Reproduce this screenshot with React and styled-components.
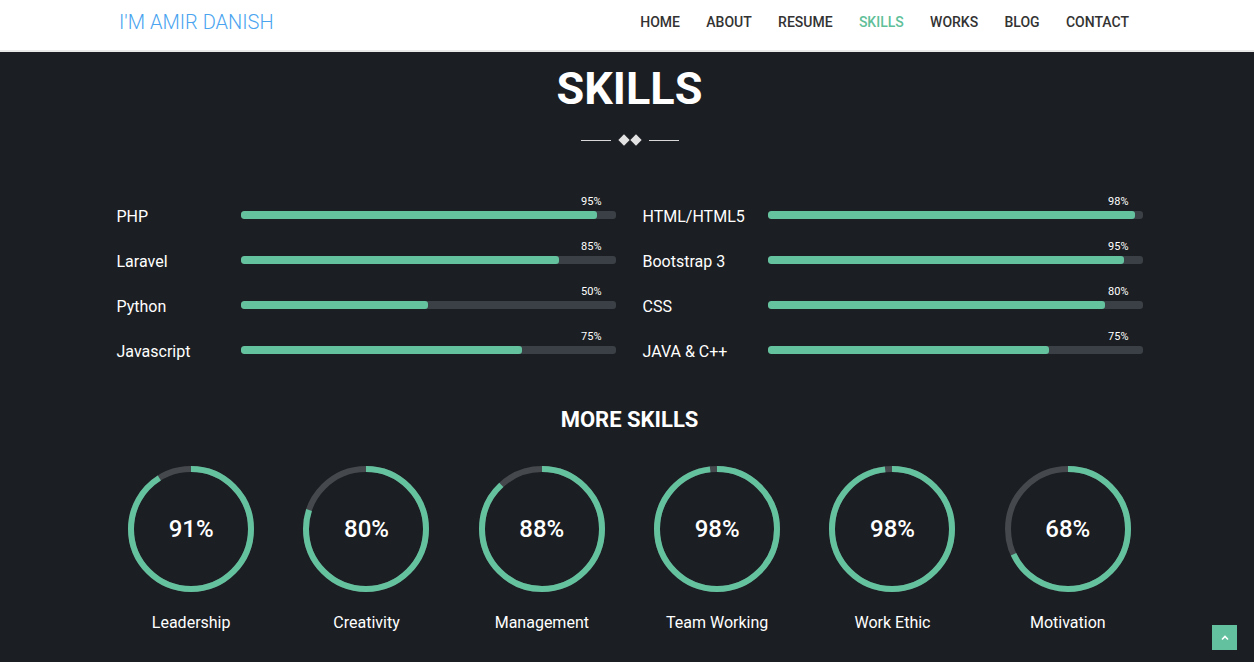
import styled, { createGlobalStyle } from "styled-components";

const GlobalStyle = createGlobalStyle`
  * {
    box-sizing: border-box;
  }
  body {
    margin: 0;
    background-color: #1b1e22;
    font-family: Roboto, "Liberation Sans", sans-serif;
    color: #fff;
    overflow: hidden;
  }
`;

const Header = styled.header`
  height: 52px;
  padding-right: 6px;
  background-color: #fff;
  border-bottom: 2px solid #e9e9e9;
`;

const HeaderInner = styled.div`
  width: 1010px;
  margin: 0 auto;
  height: 43px;
  display: flex;
  align-items: center;
  justify-content: space-between;
`;

const Logo = styled.a`
  font-size: 20px;
  font-weight: 300;
  color: #4aa4f0;
  text-decoration: none;
`;

const Nav = styled.nav`
  display: flex;
  gap: 26.3px;
`;

const NavLink = styled.a`
  font-size: 14px;
  font-weight: 500;
  color: ${(p) => (p.$active ? "#5fbf99" : "#333")};
  text-decoration: none;
`;

const Section = styled.section`
  padding: 14px 0 0 5px;
`;

const Container = styled.div`
  width: 1026px;
  margin: 0 auto;
`;

const Title = styled.h1`
  margin: 0;
  font-size: 45px;
  line-height: 46px;
  font-weight: 700;
  text-align: center;
`;

const Separator = styled.div`
  display: flex;
  justify-content: center;
  align-items: center;
  height: 10px;
  margin-top: 23px;
  gap: 9px;
`;

const Line = styled.span`
  width: 30px;
  height: 1px;
  background-color: #d8d8d8;
`;

const Diamonds = styled.span`
  display: flex;
  gap: 4px;
`;

const Diamond = styled.span`
  width: 8px;
  height: 8px;
  background-color: #e2e2e2;
  transform: rotate(45deg);
`;

const BarsGrid = styled.div`
  display: grid;
  grid-template-columns: 499px 500px;
  gap: 27px;
  margin-top: 50px;
`;

const BarList = styled.div`
  display: flex;
  flex-direction: column;
  gap: 21px;
`;

const SkillRow = styled.div`
  display: grid;
  grid-template-columns: ${(p) => p.$labelWidth}px 1fr;
  grid-template-rows: 13px 8px;
  row-gap: 3px;
`;

const Percent = styled.span`
  grid-column: 2;
  grid-row: 1;
  font-size: 11px;
  line-height: 13px;
  text-align: right;
  padding-right: 14px;
  color: #fff;
`;

const SkillLabel = styled.span`
  grid-column: 1;
  grid-row: 2;
  align-self: center;
  padding-top: 4px;
  font-size: 16px;
  line-height: 20px;
  white-space: nowrap;
`;

const Track = styled.div`
  grid-column: 2;
  grid-row: 2;
  height: 8px;
  border-radius: 3px;
  background-color: #3b3f46;
  overflow: hidden;
`;

const Fill = styled.div`
  height: 100%;
  background-color: #65c29f;
  border-radius: 3px;
`;

const SubTitle = styled.h2`
  margin: 53px 0 0;
  font-size: 22px;
  line-height: 26px;
  font-weight: 700;
  text-align: center;
`;

const CircleRow = styled.div`
  width: 1052px;
  margin: 32px auto 0;
  display: grid;
  grid-template-columns: repeat(6, 1fr);
`;

const CircleItem = styled.div`
  display: flex;
  flex-direction: column;
  align-items: center;
`;

const Ring = styled.div`
  position: relative;
  width: 128px;
  height: 128px;
`;

const RingValue = styled.span`
  position: absolute;
  inset: 0;
  display: flex;
  align-items: center;
  justify-content: center;
  font-size: 24px;
  font-weight: 500;
`;

const CircleLabel = styled.span`
  margin-top: 20px;
  font-size: 16px;
  line-height: 20px;
`;

const ScrollTop = styled.a`
  position: fixed;
  right: 17px;
  bottom: 12px;
  width: 25px;
  height: 25px;
  background-color: #64c19f;
  display: flex;
  align-items: center;
  justify-content: center;
`;

const navItems = ["HOME", "ABOUT", "RESUME", "SKILLS", "WORKS", "BLOG", "CONTACT"];

const leftSkills = [
  { name: "PHP", value: 95, fill: 95 },
  { name: "Laravel", value: 85, fill: 85 },
  { name: "Python", value: 50, fill: 50 },
  { name: "Javascript", value: 75, fill: 75 },
];

const rightSkills = [
  { name: "HTML/HTML5", value: 98, fill: 98 },
  { name: "Bootstrap 3", value: 95, fill: 95 },
  { name: "CSS", value: 80, fill: 90 },
  { name: "JAVA & C++", value: 75, fill: 75 },
];

const moreSkills = [
  { name: "Leadership", value: 91 },
  { name: "Creativity", value: 80 },
  { name: "Management", value: 88 },
  { name: "Team Working", value: 98 },
  { name: "Work Ethic", value: 98 },
  { name: "Motivation", value: 68 },
];

function CircleChart({ value }) {
  const r = 60;
  const c = 2 * Math.PI * r;
  return (
    <Ring>
      <svg width="128" height="128" viewBox="0 0 128 128">
        <circle cx="64" cy="64" r={r} fill="none" stroke="#45484d" strokeWidth="6" />
        <circle
          cx="64"
          cy="64"
          r={r}
          fill="none"
          stroke="#65c29f"
          strokeWidth="6"
          strokeDasharray={`${(c * value) / 100} ${c}`}
          transform="rotate(-90 64 64)"
        />
      </svg>
      <RingValue>{value}%</RingValue>
    </Ring>
  );
}

function BarColumn({ skills, labelWidth }) {
  return (
    <BarList>
      {skills.map((s) => (
        <SkillRow key={s.name} $labelWidth={labelWidth}>
          <Percent>{s.value}%</Percent>
          <SkillLabel>{s.name}</SkillLabel>
          <Track>
            <Fill style={{ width: `${s.fill}%` }} />
          </Track>
        </SkillRow>
      ))}
    </BarList>
  );
}

export default function App() {
  return (
    <>
      <GlobalStyle />
      <Header>
        <HeaderInner>
          <Logo href="#">I'M AMIR DANISH</Logo>
          <Nav>
            {navItems.map((item) => (
              <NavLink key={item} href="#" $active={item === "SKILLS"}>
                {item}
              </NavLink>
            ))}
          </Nav>
        </HeaderInner>
      </Header>
      <Section>
        <Title>SKILLS</Title>
        <Separator>
          <Line />
          <Diamonds>
            <Diamond />
            <Diamond />
          </Diamonds>
          <Line />
        </Separator>
        <Container>
          <BarsGrid>
            <BarColumn skills={leftSkills} labelWidth={124} />
            <BarColumn skills={rightSkills} labelWidth={125} />
          </BarsGrid>
        </Container>
        <SubTitle>MORE SKILLS</SubTitle>
        <CircleRow>
          {moreSkills.map((s) => (
            <CircleItem key={s.name}>
              <CircleChart value={s.value} />
              <CircleLabel>{s.name}</CircleLabel>
            </CircleItem>
          ))}
        </CircleRow>
      </Section>
      <ScrollTop href="#">
        <svg width="10" height="10" viewBox="0 0 10 10">
          <path d="M2 6.5 L5 3.5 L8 6.5" fill="none" stroke="#fff" strokeWidth="1.6" />
        </svg>
      </ScrollTop>
    </>
  );
}
